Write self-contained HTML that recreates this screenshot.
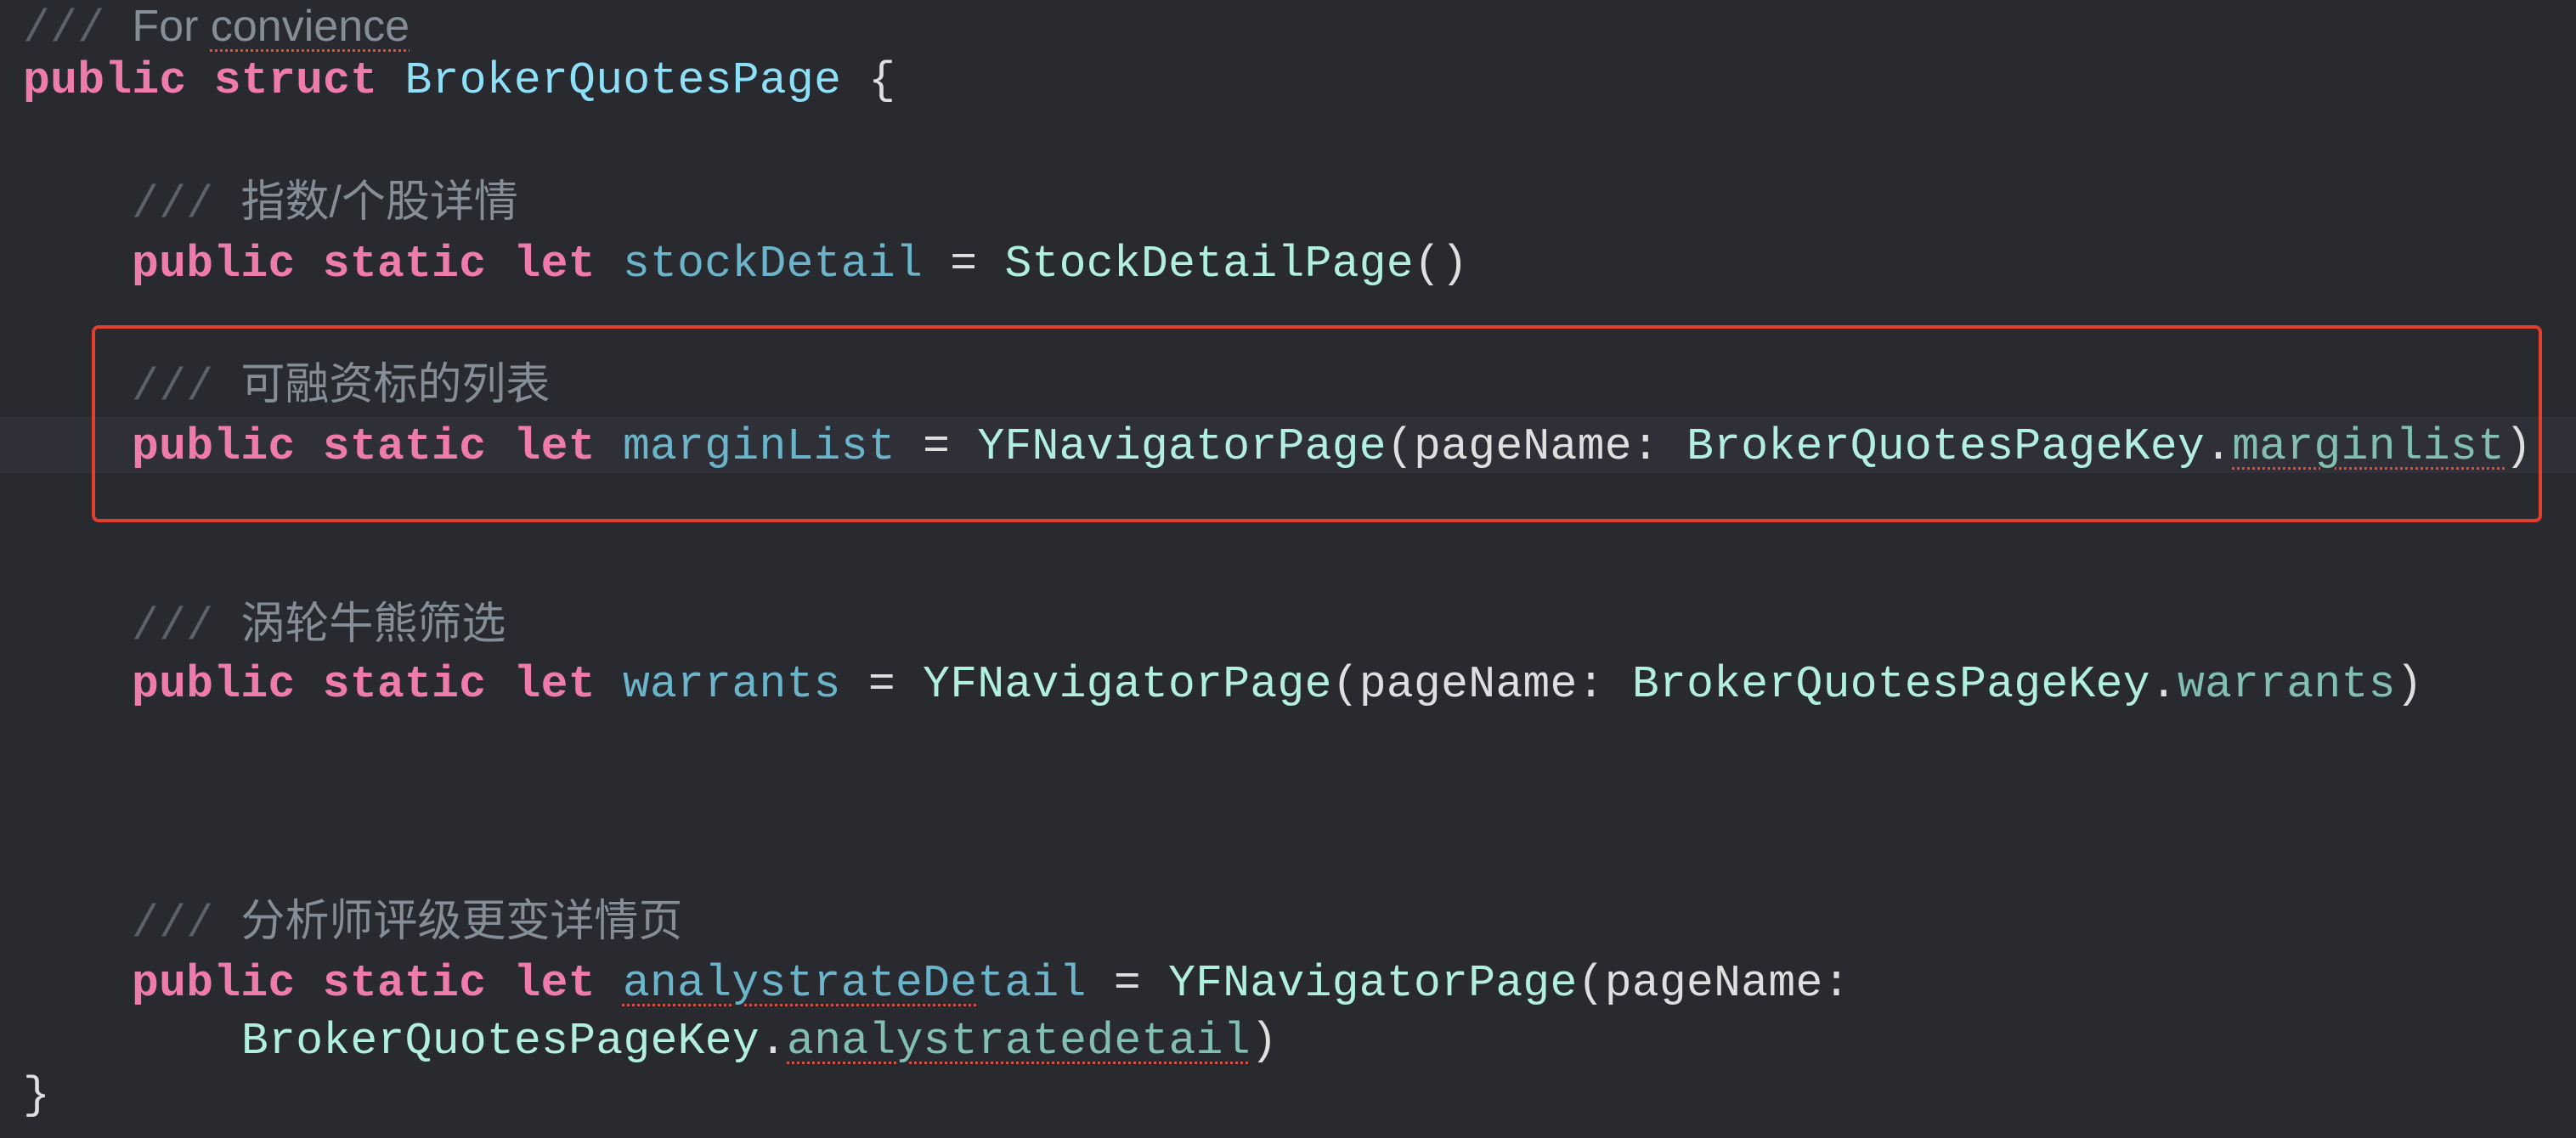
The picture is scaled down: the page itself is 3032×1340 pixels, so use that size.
<!DOCTYPE html>
<html><head><meta charset="utf-8"><style>
html,body{margin:0;padding:0;background:#292a30;}
body{width:3032px;height:1340px;position:relative;overflow:hidden;}
.l{position:absolute;white-space:pre;font-family:"Liberation Mono","Noto Sans CJK SC",monospace;font-size:53px;line-height:64px;color:#dfdfe0;letter-spacing:0.3px;}
.c{position:absolute;white-space:pre;font-family:"Liberation Sans","Noto Sans CJK SC",sans-serif;font-size:52px;line-height:64px;color:#858d96;}
.s{color:#5c626b;font-family:"Liberation Mono",monospace;font-size:53px;letter-spacing:0.3px;}
.k{color:#ee7bab;font-weight:bold;}
.t{color:#8ee0f8;}
.o{color:#b2efe0;}
.p{color:#6bb4c9;}
.m{color:#82bfb2;}
.u{text-decoration:underline dotted #c4574a;text-decoration-thickness:3px;text-underline-offset:10px;}
#hl{position:absolute;left:0;top:491px;width:3032px;height:66px;background:#2f3037;}
#box{position:absolute;left:108px;top:383px;width:2876px;height:224px;border:4px solid #e0402b;border-radius:8px;}
</style></head><body>
<div id="hl"></div>
<div id="box"></div>
<div class="c" style="left:27px;top:-1px"><span class="s">/// </span>For <span class="u">convience</span></div>
<div class="l" style="left:27px;top:63px"><span class="k">public</span> <span class="k">struct</span> <span class="t">BrokerQuotesPage</span> {</div>
<div class="c" style="left:155px;top:206px"><span class="s">/// </span>指数/个股详情</div>
<div class="l" style="left:155px;top:279px"><span class="k">public</span> <span class="k">static</span> <span class="k">let</span> <span class="p">stockDetail</span> = <span class="o">StockDetailPage</span>()</div>
<div class="c" style="left:155px;top:421px"><span class="s">/// </span>可融资标的列表</div>
<div class="l" style="left:155px;top:494px"><span class="k">public</span> <span class="k">static</span> <span class="k">let</span> <span class="p">marginList</span> = <span class="o">YFNavigatorPage</span>(pageName: <span class="o">BrokerQuotesPageKey</span>.<span class="m u">marginlist</span>)</div>
<div class="c" style="left:155px;top:703px"><span class="s">/// </span>涡轮牛熊筛选</div>
<div class="l" style="left:155px;top:774px"><span class="k">public</span> <span class="k">static</span> <span class="k">let</span> <span class="p">warrants</span> = <span class="o">YFNavigatorPage</span>(pageName: <span class="o">BrokerQuotesPageKey</span>.<span class="m">warrants</span>)</div>
<div class="c" style="left:155px;top:1053px"><span class="s">/// </span>分析师评级更变详情页</div>
<div class="l" style="left:155px;top:1126px"><span class="k">public</span> <span class="k">static</span> <span class="k">let</span> <span class="p"><span class="u">analystrateDe</span>tail</span> = <span class="o">YFNavigatorPage</span>(pageName:</div>
<div class="l" style="left:284px;top:1194px"><span class="o">BrokerQuotesPageKey</span>.<span class="m u">analystratedetail</span>)</div>
<div class="l" style="left:27px;top:1258px">}</div>
</body></html>
